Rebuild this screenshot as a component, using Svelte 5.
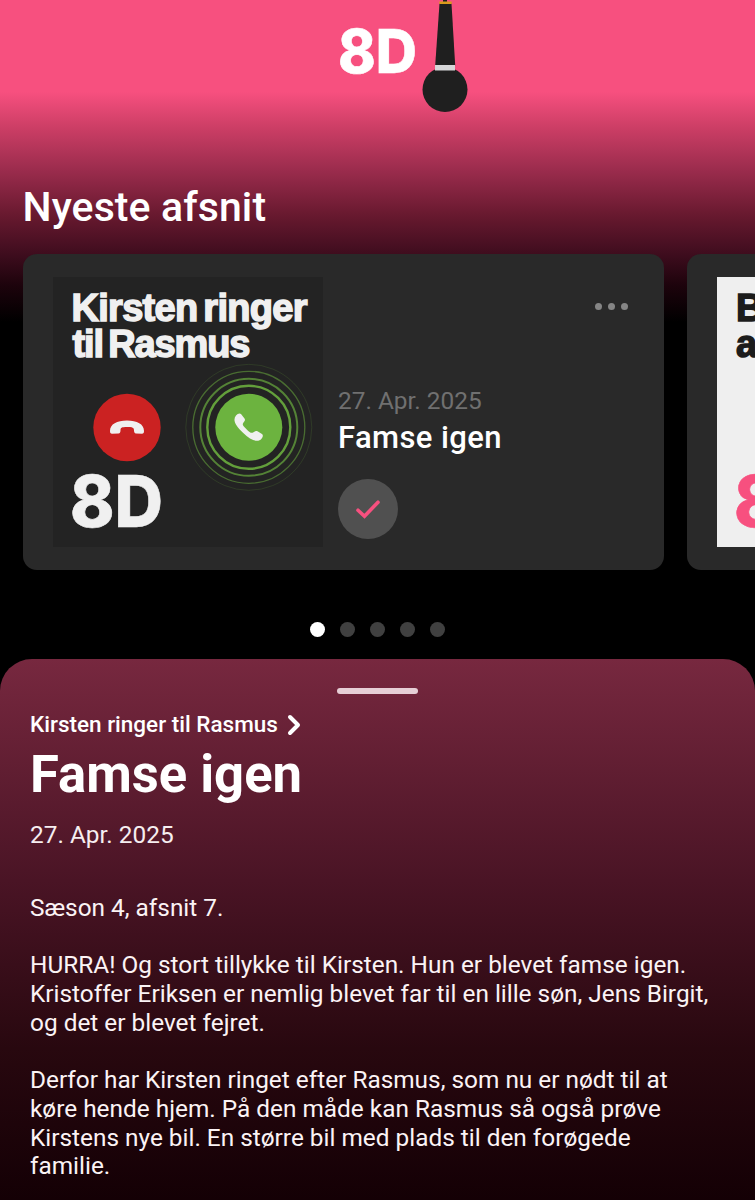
<script lang="ts">
	interface Episode {
		show: string;
		title: string;
		date: string;
		paragraphs: string[][];
	}

	const episode: Episode = {
		show: 'Kirsten ringer til Rasmus',
		title: 'Famse igen',
		date: '27. Apr. 2025',
		paragraphs: [
			['Sæson 4, afsnit 7.'],
			[
				'HURRA! Og stort tillykke til Kirsten. Hun er blevet famse igen.',
				'Kristoffer Eriksen er nemlig blevet far til en lille søn, Jens Birgit,',
				'og det er blevet fejret.'
			],
			[
				'Derfor har Kirsten ringet efter Rasmus, som nu er nødt til at',
				'køre hende hjem. På den måde kan Rasmus så også prøve',
				'Kirstens nye bil. En større bil med plads til den forøgede',
				'familie.'
			]
		]
	};

	// radius, stroke width and opacity of the rings around the answer button
	const rings = [
		[41.5, 2.4, 0.85],
		[48.5, 2, 0.65],
		[56, 1.3, 0.5],
		[63, 1, 0.16]
	];

	const pageCount = 5;
	let activePage = $state(0);
</script>

<main class="screen">
	<header class="banner">
		<svg class="logo" width="150" height="120" viewBox="330 0 150 120" aria-label="8D">
			<text class="mark" x="338" y="73" font-size="60.5" textLength="79" lengthAdjust="spacingAndGlyphs">8D</text>
			<path d="M443 0h4v3h-4z" fill="#1f1f1f" />
			<path d="M439.5 3.5h12l3.7 62h-20z" fill="#1f1f1f" />
			<path d="M439.3 1.5h12.4v2.5h-12.4z" fill="#d99a1c" />
			<circle cx="445" cy="89.5" r="22.5" fill="#1f1f1f" />
			<path d="M435 65h20v5.5h-20z" fill="#d6d6d8" />
		</svg>
	</header>

	<section class="latest">
		<h2 class="heading">Nyeste afsnit</h2>

		<div class="carousel">
			<article class="card">
				<svg class="cover" width="270" height="270" viewBox="53 277 270 270">
					<path d="M53 277h270v270H53z" fill="#232323" />
					<g class="art-text light">
						<text x="71.5" y="320.5" font-size="38" textLength="236">Kirsten ringer</text>
						<text x="72.5" y="356.5" font-size="38" textLength="178">til Rasmus</text>
						<text class="mark" x="70" y="526.5" font-size="71" textLength="93" lengthAdjust="spacingAndGlyphs">8D</text>
					</g>
					<circle cx="127" cy="427.5" r="33.7" fill="#cb2222" />
					<path
						d="M110 431C110 424 117 420.500 127 420.500S144 424 144 431C144 433 143.500 433.700 142 433.800L136 433.500C134.500 433.300 134 432 134 430.500C134 427.500 132.500 427 127 427S120.500 427.500 120.500 430.500C120.500 432 120 433.300 118.500 433.500L112 433.800C110.500 433.700 110 433 110 431Z"
						fill="#f0f0f0"
					/>
					{#each rings as [r, width, opacity]}
						<circle cx="248.8" cy="427.3" {r} fill="none" stroke="#6fb540" stroke-width={width} {opacity} />
					{/each}
					<circle cx="248.8" cy="427.3" r="33.5" fill="#6cb33f" />
					<path
						d="M236 415.500C237.500 414 239.500 412.700 241 414L244.500 418.500C245.500 420 244.800 421 243.500 422.500C242 424.500 242.700 425.500 246.500 429.200S251.500 433.500 253.500 432.200C255 431.200 256 430.500 257.500 431.300L262 434C263.500 435.200 262.800 437 261.500 438.700C258 443 251 440.500 243 432.700S232.500 420 236 415.500Z"
						fill="#f0f0f0"
					/>
				</svg>

				<div class="info">
					<button class="more" aria-label="Mere">
						<span></span><span></span><span></span>
					</button>
					<p class="card-date">{episode.date}</p>
					<h3 class="card-title">{episode.title}</h3>
					<button class="played" aria-label="Afspillet">
						<svg width="60" height="60" viewBox="0 0 60 60">
							<path d="M20 31.2l6.500 6L40 23.200" />
						</svg>
					</button>
				</div>
			</article>

			<article class="card">
				<svg class="cover" width="270" height="270" viewBox="717 277 270 270">
					<path d="M717 277h270v270H717z" fill="#efefef" />
					<g class="art-text dark">
						<text x="736" y="320.5" font-size="38">B</text>
						<text x="736" y="356.5" font-size="38">a</text>
						<text class="mark pink" x="734" y="526.5" font-size="71" textLength="93" lengthAdjust="spacingAndGlyphs">8D</text>
					</g>
				</svg>
			</article>
		</div>

		<div class="dots">
			{#each { length: pageCount } as _, i}
				<button class="dot" class:active={i === activePage} onclick={() => (activePage = i)} aria-label="Side {i + 1}"></button>
			{/each}
		</div>
	</section>

	<section class="sheet">
		<div class="handle"></div>
		<div class="show">
			<span>{episode.show}</span>
			<svg width="14" height="22" viewBox="0 0 14 22">
				<path d="M3 3l8 8-8 8" />
			</svg>
		</div>
		<h1 class="title">{episode.title}</h1>
		<p class="date">{episode.date}</p>

		<div class="description">
			{#each episode.paragraphs as lines}
				<p>
					{#each lines as line}
						<span class="line">{line}</span>
					{/each}
				</p>
			{/each}
		</div>
	</section>
</main>

<style>
	:global(body) {
		margin: 0;
		background: #000;
	}

	.screen {
		width: 755px;
		height: 1200px;
		overflow: hidden;
		display: flex;
		flex-direction: column;
		font-family: Roboto, 'Liberation Sans', sans-serif;
		color: #fff;
		background: linear-gradient(
			#f7507f 0,
			#f7507f 92px,
			#cf3f67 125px,
			#9b2c4d 170px,
			#68192f 215px,
			#430e20 250px,
			#1d030c 285px,
			#000 322px
		);
	}

	h1,
	h2,
	h3,
	p {
		margin: 0;
	}

	button {
		border: none;
		padding: 0;
		cursor: pointer;
	}

	svg {
		display: block;
	}

	.banner {
		height: 120px;
		padding-left: 330px;
	}

	.latest {
		height: 538.5px;
		flex-shrink: 0;
	}

	.heading {
		padding: 62px 0 0 22.5px;
		height: 72px;
		line-height: 50px;
		font-size: 41px;
		font-weight: 500;
		letter-spacing: 0.1px;
	}

	.carousel {
		display: flex;
		gap: 23px;
		padding-left: 23px;
	}

	.card {
		box-sizing: border-box;
		width: 641px;
		height: 316px;
		flex-shrink: 0;
		display: flex;
		gap: 15px;
		padding: 23px 30px;
		border-radius: 14px;
		background: #292929;
	}

	.cover {
		flex-shrink: 0;
	}

	.art-text {
		font-family: 'Liberation Sans', Arial, sans-serif;
		font-weight: 700;
		word-spacing: -4px;
		stroke-width: 1.5;
	}

	.light {
		fill: #f0f0f0;
		stroke: #f0f0f0;
	}

	.dark {
		fill: #1c1c1c;
		stroke: #1c1c1c;
	}

	.mark {
		font-family: Inter, sans-serif;
		font-weight: 800;
		stroke-width: 0.6;
	}

	.logo .mark {
		fill: #fff;
		stroke: #fff;
	}

	.pink {
		fill: #f7507f;
		stroke: #f7507f;
	}

	.info {
		flex: 1;
		display: flex;
		flex-direction: column;
		align-items: flex-start;
	}

	.more {
		align-self: flex-end;
		display: flex;
		gap: 6px;
		margin: 26px 6px 0 0;
		background: none;
	}

	.more span {
		width: 7px;
		height: 7px;
		border-radius: 50%;
		background: #858585;
	}

	.card-date {
		margin-top: 76px;
		line-height: 30px;
		font-size: 24.4px;
		color: #707070;
	}

	.card-title {
		margin-top: 2px;
		line-height: 40px;
		font-size: 31px;
		font-weight: 500;
		letter-spacing: 0.4px;
	}

	.played {
		width: 60px;
		height: 60px;
		margin-top: 21px;
		border-radius: 50%;
		background: #505050;
	}

	.played path {
		fill: none;
		stroke: #f7507f;
		stroke-width: 3.6;
		stroke-linecap: round;
	}

	.dots {
		display: flex;
		justify-content: center;
		gap: 15px;
		margin-top: 52px;
	}

	.dot {
		width: 15px;
		height: 15px;
		border-radius: 50%;
		background: #404040;
	}

	.dot.active {
		background: #fff;
	}

	.sheet {
		flex: 1;
		padding: 29.5px 30px 0;
		border-radius: 32px 32px 0 0;
		background: linear-gradient(#77283f, #4a1425 41%, #28080f 72%, #140005);
	}

	.handle {
		width: 81px;
		height: 6px;
		margin: 0 auto;
		border-radius: 3px;
		background: #e6cfd6;
	}

	.show {
		display: flex;
		align-items: center;
		gap: 9px;
		margin-top: 15px;
		height: 30px;
		font-size: 22.5px;
		font-weight: 500;
	}

	.show svg {
		margin-top: 2px;
	}

	.show path {
		fill: none;
		stroke: #fff;
		stroke-width: 4;
		stroke-linecap: round;
		stroke-linejoin: round;
	}

	.title {
		margin-top: 5px;
		line-height: 60px;
		font-size: 52.6px;
		font-weight: 700;
	}

	.date {
		margin-top: 15.5px;
		line-height: 30px;
		font-size: 24.4px;
		color: #f6eef0;
	}

	.description {
		margin-top: 44.5px;
		display: flex;
		flex-direction: column;
		gap: 28.7px;
		line-height: 28.7px;
		font-size: 24.38px;
		color: #fbf3f5;
	}

	.line {
		display: block;
		white-space: nowrap;
	}
</style>
